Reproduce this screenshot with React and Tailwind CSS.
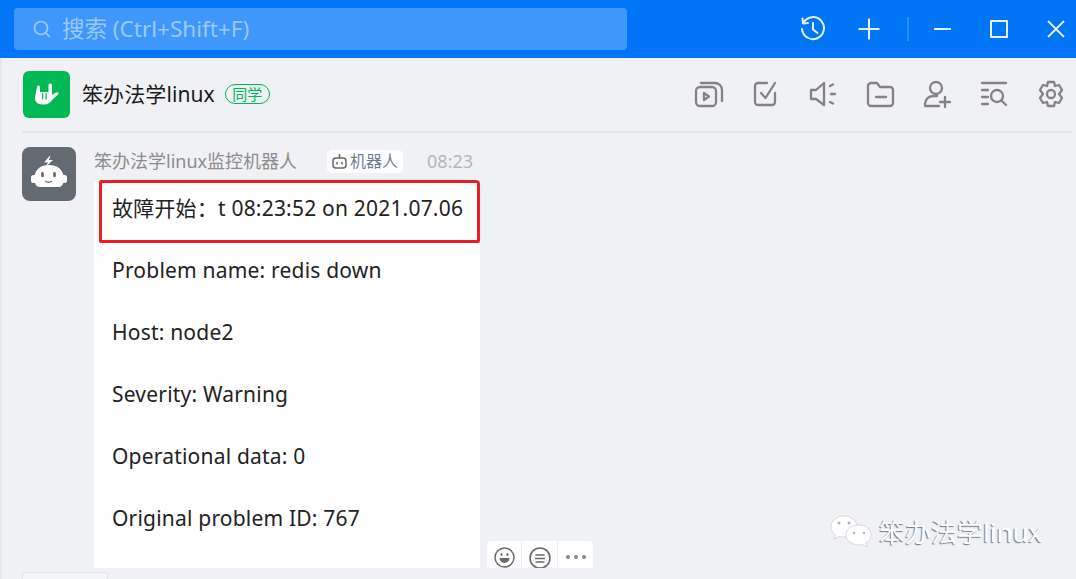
import React from 'react';

const lines = ['Problem name: redis down', 'Host: node2', 'Severity: Warning', 'Operational data: 0', 'Original problem ID: 767'];

const Stroke = ({ children, size = 30, className = '' }) => (
  <svg width={size} height={size} viewBox="0 0 30 30" fill="none" stroke="currentColor" strokeWidth="2.300" strokeLinecap="round" strokeLinejoin="round" className={className}>
    {children}
  </svg>
);

const toolIcons = [
  <>
    <rect x="2" y="8" width="20" height="19" rx="4" />
    <path d="M7 4h14a7 7 0 0 1 7 7v11" />
    <path d="M10 14l5 3.500-5 3.500z" />
  </>,
  <>
    <path d="M24 14v9a3 3 0 0 1-3 3H7a3 3 0 0 1-3-3V7a3 3 0 0 1 3-3h9" />
    <path d="M10 14l4.500 5L24 4" />
  </>,
  <>
    <path d="M3 11v9h5l8 6V4l-8 7z" />
    <path d="M22 7l3-1.500M23 15h4M22 23l3 1.500" />
  </>,
  <>
    <path d="M3 7a3 3 0 0 1 3-3h6l3 4h10a3 3 0 0 1 3 3v13a3 3 0 0 1-3 3H6a3 3 0 0 1-3-3z" />
    <path d="M11 18h10" />
  </>,
  <>
    <circle cx="14" cy="9" r="6" />
    <path d="M3 27v-2a8 8 0 0 1 8-8h4M3 27h14M23 18v10M18 23h10" />
  </>,
  <>
    <path d="M3 4h24M3 11h6M3 18h6M3 25h6" />
    <circle cx="18" cy="17" r="6" />
    <path d="M22.500 21.500l4.500 4.500" />
  </>,
  <>
    <path d="M12 3h6l1 4 4-1 3 5-3 4 3 4-3 5-4-1-1 4h-6l-1-4-4 1-3-5 3-4-3-4 3-5 4 1z" />
    <circle cx="15" cy="15" r="4" />
  </>,
];

const App = () => {
  return (
    <div className="w-[1076px] h-[579px] overflow-hidden relative flex flex-col bg-[#f0f1f4] font-['Noto_Sans','Noto_Sans_CJK_SC',sans-serif]">
      {/* top bar */}
      <div className="h-[58px] shrink-0 bg-[#0075f6] flex items-center pl-[14px]">
        <div className="w-[613px] h-[42px] rounded-[4px] bg-[#3f97fb] flex items-center pl-[19px] text-[#9cc8fb]">
          <svg width="18" height="18" viewBox="0 0 18 18" fill="none" stroke="currentColor" strokeWidth="1.700" strokeLinecap="round">
            <circle cx="8" cy="8" r="6.500" />
            <path d="M13 13l3.500 3.500" />
          </svg>
          <span className="ml-[11px] text-[22.500px] leading-none">搜索 (Ctrl+Shift+F)</span>
        </div>
        <div className="flex items-center text-[#e6f0fe] ml-[173px]">
          <svg width="26" height="26" viewBox="0 0 26 26" fill="none" stroke="currentColor" strokeWidth="2" strokeLinecap="round" strokeLinejoin="round">
            <path d="M3.500 6.500A11 11 0 1 1 2 13" />
            <path d="M2.500 2.500l.5 5 5-.5" />
            <path d="M13 7v6.500l4.500 3.500" />
          </svg>
          <svg width="24" height="24" viewBox="0 0 24 24" fill="none" stroke="currentColor" strokeWidth="2" className="ml-[31px]">
            <path d="M12 1.500v21M1.500 12h21" />
          </svg>
          <div className="w-[2px] h-[24px] bg-[#2f8ff8] ml-[26px]" />
          <svg width="20" height="4" viewBox="0 0 20 4" fill="none" stroke="currentColor" strokeWidth="2" className="ml-[24px]">
            <path d="M1 2h17" />
          </svg>
          <div className="w-[18px] h-[18px] border-2 border-[#e6f0fe] rounded-[1px] ml-[37px]" />
          <svg width="20" height="20" viewBox="0 0 20 20" fill="none" stroke="currentColor" strokeWidth="1.800" className="ml-[38px]">
            <path d="M2 2l16 16M18 2L2 18" />
          </svg>
        </div>
      </div>

      <div className="flex-1 min-h-0 flex flex-col border-l-2 border-[#e6e7ea]">
        {/* chat header */}
        <div className="h-[75px] shrink-0 ml-[20px] mr-[4px] border-b-2 border-[#e3e4e7] flex items-center pb-px">
          <div className="w-[47px] h-[47px] ml-px rounded-[6px] bg-[#00b955] flex items-center justify-center">
            <svg width="24" height="24" viewBox="0 0 24 24" fill="#fff">
              <path d="M2 5q0-1.500 1.500-1.500T5 5v5h8.500V3q0-1.500 1.700-1.500T17 3v10l4-2.500q1.500-.8 2.300.3t-.5 2l-5.500 5q-3 4.700-8 4.700h-2q-7.300 0-7.300-7z" />
              <path d="M7 11h1.200v6.500H7zM10.500 11h1.200v6.500h-1.200z" fill="#00b955" />
            </svg>
          </div>
          <span className="ml-[12px] text-[21px] tracking-[0.1px] leading-none text-[#1b1b1b]">笨办法学linux</span>
          <span className="ml-[10px] w-[45px] h-[20px] rounded-full border border-[#00b955] text-[#00b955] text-[15px] leading-[18px] text-center">同学</span>
          <div className="ml-auto flex items-center gap-[27px] text-[#838383] mr-[6px]">
            {toolIcons.map((icon, i) => (
              <Stroke key={i}>{icon}</Stroke>
            ))}
          </div>
        </div>

        {/* message */}
        <div className="flex pl-[20px] pt-[14px] min-h-0 flex-1">
          <div className="w-[54px] h-[54px] rounded-[8px] bg-[#646a71] shrink-0">
            <svg width="54" height="54" viewBox="0 0 54 54" fill="#fff">
              <path d="M28.500 8l-6.500 7.500h4l-2.500 4.500 7.500-7h-4z" />
              <path d="M27 18c8 0 13 4 14.300 10h1.200a2.500 2.500 0 0 1 2.500 2.500v3a2.500 2.500 0 0 1-2.500 2.500h-1.300q-1 4-5 4H18q-4 0-5-4h-1.500A2.500 2.500 0 0 1 9 33.500v-3a2.500 2.500 0 0 1 2.500-2.500h1.200C14 22 19 18 27 18z" />
              <ellipse cx="20.500" cy="27.500" rx="1.500" ry="2.800" fill="#646a71" />
              <ellipse cx="32.500" cy="27.500" rx="1.500" ry="2.800" fill="#646a71" />
              <path d="M23.500 34.500q3 1.500 6 0" fill="none" stroke="#646a71" strokeWidth="1.300" strokeLinecap="round" />
            </svg>
          </div>
          <div className="ml-[18px] flex flex-col min-h-0 flex-1">
            <div className="flex items-center h-[33px] shrink-0 pb-[5px]">
              <span className="text-[18px] leading-none text-[#8c8c8c]">笨办法学linux监控机器人</span>
              <span className="ml-[30px] w-[76px] h-[23px] bg-white rounded-[5px] flex items-center pl-[5px] text-[16px] leading-none text-[#6d7f93]">
                <svg width="15" height="16" viewBox="0 0 15 16" fill="none" stroke="#666" strokeWidth="1.500">
                  <rect x="1" y="5" width="13" height="10" rx="3" />
                  <path d="M7.500 1v4M5 9v2.500M10 9v2.500" />
                </svg>
                <span className="ml-[3px]">机器人</span>
              </span>
              <span className="ml-[24px] text-[18px] leading-none text-[#b5b6b9]">08:23</span>
            </div>
            <div className="flex flex-1 min-h-0 items-end">
              <div className="w-[386px] h-full bg-white rounded-t-[4px] pl-[5px] text-[21px] tracking-[0.2px] leading-[25px] text-[#222] overflow-hidden">
                <div className="h-[63px] border-[3px] border-[#ee1c25] rounded-[2px] pl-[10px] pt-[13px] whitespace-nowrap">
                  故障开始：t 08:23:52 on 2021.07.06
                </div>
                <div className="pl-[13px] pt-[15px] flex flex-col gap-[37px]">
                  {lines.map((line) => (
                    <div key={line} className="whitespace-nowrap">{line}</div>
                  ))}
                </div>
              </div>
              <div className="ml-[7px] w-[106px] h-[27px] bg-white rounded-t-[4px] flex text-[#6b6b6b]">
                <div className="w-[34px] pt-[6px] flex justify-center overflow-hidden">
                  <svg width="21" height="21" viewBox="0 0 21 21" fill="none" stroke="currentColor" strokeWidth="1.500" className="shrink-0">
                    <circle cx="10.500" cy="10.500" r="9.500" />
                    <ellipse cx="7.500" cy="7.500" rx="1" ry="1.500" fill="currentColor" stroke="none" />
                    <ellipse cx="13.500" cy="7.500" rx="1" ry="1.500" fill="currentColor" stroke="none" />
                    <path d="M5.500 11h10a5 5 0 0 1-10 0z" fill="currentColor" stroke="none" />
                  </svg>
                </div>
                <div className="w-[37px] pt-[6px] flex justify-center border-x border-[#eeeff2] overflow-hidden">
                  <svg width="24" height="26" viewBox="0 0 24 26" fill="none" stroke="currentColor" strokeWidth="1.600" className="shrink-0">
                    <circle cx="12" cy="11" r="10" />
                    <path d="M7.500 8h9M7 11.500h10M7.500 15h9" />
                  </svg>
                </div>
                <div className="flex-1 flex items-center justify-center gap-[4px] pt-[4px]">
                  <span className="w-[4px] h-[4px] rounded-full bg-[#888]" />
                  <span className="w-[4px] h-[4px] rounded-full bg-[#888]" />
                  <span className="w-[4px] h-[4px] rounded-full bg-[#888]" />
                </div>
              </div>
            </div>
          </div>
        </div>
        <div className="h-[11px] shrink-0 pl-[20px] pt-[4px]">
          <div className="w-[86px] h-[8px] rounded-t-[3px] border border-b-0 border-[#e3e4e7] bg-[#f4f5f7]" />
        </div>
      </div>

      {/* watermark */}
      <div className="absolute left-[829px] top-[513px] flex items-center">
        <svg width="44" height="38" viewBox="0 0 44 38" fill="#fff" stroke="#c9c9c9" strokeWidth=".7">
          <path d="M15 3C8 3 2 7.500 2 14c0 3.500 2 6 4.500 8L5 26l5-2.500c1.500.4 3 .6 4.500.6C21 24 28 20 28 14 28 7.500 22 3 15 3z" />
          <path d="M30 12c-7 0-13 4-13 10s6 10 13 10c1.300 0 2.500-.2 3.500-.5L38 34l-1-4c3-2 5-4.500 5-8 0-6-5.500-10-12-10z" />
          <circle cx="10" cy="10" r="1.200" fill="#999" />
          <circle cx="20" cy="10" r="1.200" fill="#999" />
          <circle cx="25" cy="20" r="1.100" fill="#999" />
          <circle cx="35" cy="20" r="1.100" fill="#999" />
        </svg>
        <span className="ml-[6px] text-[26px] leading-none text-white [text-shadow:-1px_1px_1px_#777]">笨办法学linux</span>
      </div>
    </div>
  );
};

export default App;
